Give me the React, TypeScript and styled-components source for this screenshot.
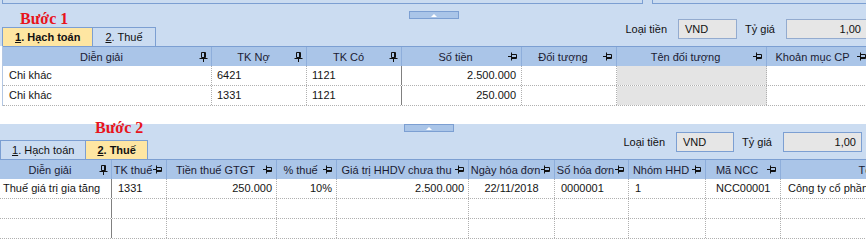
import React from 'react';
import styled, { createGlobalStyle } from 'styled-components';

const C = {
    bg: '#cbdcf1',
    head: '#aac5e8',
    line: '#7c9fd2',
    tab: '#fee6a2',
    field: '#e6e6e6',
    grey: '#e4e4e4',
    dot: '#b0b0b0',
    red: '#e8141c',
};

const GlobalStyle = createGlobalStyle`
    body {
        margin: 0;
        background: #fff;
        font-family: "Liberation Sans", Arial, sans-serif;
        font-size: 11px;
        color: #141414;
        overflow: hidden;
    }
`;

const Page = styled.div`
    width: 866px;
    height: 242px;
    overflow: hidden;
    display: flex;
    flex-direction: column;
`;

const Section = styled.div<{ $h: number }>`
    position: relative;
    height: ${p => p.$h}px;
    background: ${C.bg};
    display: flex;
    flex-direction: column;
    flex: none;
`;

const TopStrip = styled.div`
    height: 4px;
    display: flex;
    gap: 9px;
    padding-left: 2px;
`;

const StripBox = styled.div<{ $w: number }>`
    width: ${p => p.$w}px;
    flex: none;
    box-sizing: border-box;
    border: 1px solid ${C.line};
    border-top: none;
`;

// splitter grip sits over the top edge of the panel
const Grip = styled.div<{ $left: number; $top: number }>`
    position: absolute;
    left: ${p => p.$left}px;
    top: ${p => p.$top}px;
    width: 50px;
    height: 8px;
    box-sizing: border-box;
    background: ${C.head};
    border: 1px solid ${C.line};
    display: flex;
    justify-content: center;
    align-items: center;
    z-index: 2;

    &::after {
        content: '';
        border-left: 3px solid transparent;
        border-right: 3px solid transparent;
        border-bottom: 3px solid #fff;
    }
`;

const Head = styled.div<{ $pl: number; $pr: number }>`
    display: flex;
    justify-content: space-between;
    align-items: flex-end;
    padding: 0 ${p => p.$pr}px 0 ${p => p.$pl}px;
`;

const LeftCol = styled.div`
    display: flex;
    flex-direction: column;
`;

const StepLabel = styled.div<{ $ml: number; $mt: number }>`
    margin: ${p => p.$mt}px 0 0 ${p => p.$ml}px;
    height: 16px;
    line-height: 16px;
    font-family: "Liberation Serif", "Times New Roman", serif;
    font-weight: bold;
    font-size: 16px;
    color: ${C.red};
    position: relative;
    z-index: 1;
`;

const Tabs = styled.div<{ $mt: number }>`
    display: flex;
    margin-top: ${p => p.$mt}px;
`;

const Tab = styled.div<{ $active?: boolean; $px?: number }>`
    height: 19px;
    line-height: 18px;
    box-sizing: border-box;
    padding: 0 ${p => p.$px ?? 11}px;
    border: 1px solid ${C.line};
    border-bottom: none;
    background: ${p => (p.$active ? C.tab : C.bg)};
    font-weight: ${p => (p.$active ? 'bold' : 'normal')};
    color: #111;
    white-space: nowrap;

    & + & {
        margin-left: -1px;
    }

    u {
        text-decoration: underline;
    }
`;

const Fields = styled.div`
    display: flex;
    align-items: center;
    margin-bottom: 7px;
`;

const FieldLabel = styled.span`
    margin-right: 11px;
    color: #111;
`;

const FieldBox = styled.div<{ $w: number; $right?: boolean; $border: string }>`
    width: ${p => p.$w}px;
    height: 20px;
    line-height: 18px;
    box-sizing: border-box;
    flex: none;
    background: ${C.field};
    border: 1px solid ${p => p.$border};
    padding: 0 5px 0 6px;
    text-align: ${p => (p.$right ? 'right' : 'left')};
    margin-right: 8px;
    color: #111;

    &:last-child {
        margin-right: 0;
    }
`;

const GridBody = styled.div<{ $pl: number }>`
    flex: 1;
    background: #fff;
    padding-left: ${p => p.$pl}px;
    overflow: hidden;
`;

const Grid = styled.div<{ $edge?: boolean }>`
    border-left: ${p => (p.$edge ? `1px solid #b3c7e3` : 'none')};
    width: max-content;
`;

const HeaderRow = styled.div`
    display: flex;
    height: 20px;
    box-sizing: border-box;
    background: ${C.head};
    border-top: 1px solid ${C.line};
`;

const HeaderCell = styled.div<{ $w: number }>`
    width: ${p => p.$w}px;
    flex: none;
    box-sizing: border-box;
    display: flex;
    align-items: center;
    padding: 0 3px 0 1px;
    border-right: 1px solid #8eaedb;
    color: #1b1b33;
`;

const HeaderText = styled.span`
    flex: 1;
    text-align: center;
    white-space: nowrap;
`;

const Row = styled.div`
    display: flex;
    height: 20px;
    box-sizing: border-box;
    border-bottom: 1px dotted ${C.dot};
`;

const Cell = styled.div<{ $w: number; $align?: string; $pad?: number; $grey?: boolean; $solid?: boolean }>`
    width: ${p => p.$w}px;
    flex: none;
    box-sizing: border-box;
    line-height: 19px;
    padding: 0 ${p => p.$pad ?? 5}px;
    text-align: ${p => p.$align ?? 'left'};
    white-space: nowrap;
    overflow: hidden;
    background: ${p => (p.$grey ? C.grey : 'transparent')};
    border-right: 1px ${p => (p.$solid ? 'solid #808080' : `dotted ${C.dot}`)};
`;

const PinV = () => (
    <svg width="9" height="10" viewBox="0 0 9 10" style={{ flex: 'none' }}>
        <path d="M2.5 0.5h4v5h-4z M5.5 0.5v5" fill="none" stroke="#111" />
        <path d="M0.5 6.5h8 M4.5 6.5v3.5" stroke="#111" />
    </svg>
);

const PinH = () => (
    <svg width="10" height="9" viewBox="0 0 10 9" style={{ flex: 'none' }}>
        <path d="M0 4.5h3.5 M3.5 0.5v8" stroke="#111" />
        <path d="M3.5 2.5h5v4h-5z M3.5 5.5h5" fill="none" stroke="#111" />
    </svg>
);

interface Col {
    title: string;
    w: number;
    pin: 'v' | 'h';
}

interface CellData {
    text?: string;
    align?: string;
    pad?: number;
    grey?: boolean;
}

const cols1: Col[] = [
    { title: 'Diễn giải', w: 209, pin: 'v' },
    { title: 'TK Nợ', w: 95, pin: 'v' },
    { title: 'TK Có', w: 95, pin: 'v' },
    { title: 'Số tiền', w: 120, pin: 'h' },
    { title: 'Đối tượng', w: 95, pin: 'h' },
    { title: 'Tên đối tượng', w: 150, pin: 'h' },
    { title: 'Khoản mục CP', w: 104, pin: 'h' },
];

const rows1: CellData[][] = [
    [{ text: 'Chi khác', pad: 6 }, { text: '6421' }, { text: '1121' }, { text: '2.500.000', align: 'right' }, {}, { grey: true }, {}],
    [{ text: 'Chi khác', pad: 6 }, { text: '1331' }, { text: '1121' }, { text: '250.000', align: 'right' }, {}, { grey: true }, {}],
];

const cols2: Col[] = [
    { title: 'Diễn giải', w: 112, pin: 'v' },
    { title: 'TK thuế', w: 55, pin: 'h' },
    { title: 'Tiền thuế GTGT', w: 110, pin: 'h' },
    { title: '% thuế', w: 60, pin: 'h' },
    { title: 'Giá trị HHDV chưa thu', w: 132, pin: 'h' },
    { title: 'Ngày hóa đơn', w: 86, pin: 'h' },
    { title: 'Số hóa đơn', w: 74, pin: 'h' },
    { title: 'Nhóm HHD', w: 77, pin: 'h' },
    { title: 'Mã NCC', w: 75, pin: 'h' },
    { title: 'Tên nhà cung cấp', w: 256, pin: 'h' },
];

const empty2: CellData[] = cols2.map(() => ({}));

const rows2: CellData[][] = [
    [
        { text: 'Thuế giá trị gia tăng', pad: 3 },
        { text: '1331', pad: 6 },
        { text: '250.000', align: 'right', pad: 4 },
        { text: '10%', align: 'right', pad: 4 },
        { text: '2.500.000', align: 'right', pad: 4 },
        { text: '22/11/2018', align: 'center' },
        { text: '0000001', pad: 6 },
        { text: '1', pad: 6 },
        { text: 'NCC00001', pad: 10 },
        { text: 'Công ty cổ phần thương mại', pad: 7 },
    ],
    empty2,
    empty2,
];

const DataGrid = ({ cols, rows, solidAt, edge }: { cols: Col[]; rows: CellData[][]; solidAt: number; edge?: boolean }) => (
    <Grid $edge={edge}>
        <HeaderRow>
            {cols.map(c => (
                <HeaderCell key={c.title} $w={c.w}>
                    <HeaderText>{c.title}</HeaderText>
                    {c.pin === 'v' ? <PinV /> : <PinH />}
                </HeaderCell>
            ))}
        </HeaderRow>
        {rows.map((r, i) => (
            <Row key={i}>
                {r.map((d, j) => (
                    <Cell key={j} $w={cols[j].w} $align={d.align} $pad={d.pad} $grey={d.grey} $solid={j === solidAt}>
                        {d.text}
                    </Cell>
                ))}
            </Row>
        ))}
    </Grid>
);

const App = () => {
    return (
        <>
            <GlobalStyle />
            <Page>
                <Section $h={124}>
                    <TopStrip>
                        <StripBox $w={641} />
                        <StripBox $w={216} />
                    </TopStrip>
                    <Grip $left={409} $top={11} />
                    <Head $pl={2} $pr={0}>
                        <LeftCol>
                            <StepLabel $ml={18} $mt={7}>Bước 1</StepLabel>
                            <Tabs $mt={0}>
                                <Tab $active $px={12}><u>1</u>. Hạch toán</Tab>
                                <Tab $px={12}><u>2</u>. Thuế</Tab>
                            </Tabs>
                        </LeftCol>
                        <Fields>
                            <FieldLabel>Loại tiền</FieldLabel>
                            <FieldBox $w={59} $border="#93abcf">VND</FieldBox>
                            <FieldLabel>Tỷ giá</FieldLabel>
                            <FieldBox $w={81} $right $border="#93abcf" style={{ marginRight: -1 }}>1,00</FieldBox>
                        </Fields>
                    </Head>
                    <GridBody $pl={2}>
                        <DataGrid cols={cols1} rows={rows1} solidAt={2} edge />
                    </GridBody>
                </Section>
                <Section $h={118}>
                    <Grip $left={404} $top={0} />
                    <Head $pl={0} $pr={4}>
                        <LeftCol>
                            <StepLabel $ml={95} $mt={-4}>Bước 2</StepLabel>
                            <Tabs $mt={4}>
                                <Tab><u>1</u>. Hạch toán</Tab>
                                <Tab $active><u>2</u>. Thuế</Tab>
                            </Tabs>
                        </LeftCol>
                        <Fields>
                            <FieldLabel>Loại tiền</FieldLabel>
                            <FieldBox $w={58} $border={C.line}>VND</FieldBox>
                            <FieldLabel>Tỷ giá</FieldLabel>
                            <FieldBox $w={79} $right $border={C.line}>1,00</FieldBox>
                        </Fields>
                    </Head>
                    <GridBody $pl={0}>
                        <DataGrid cols={cols2} rows={rows2} solidAt={0} />
                    </GridBody>
                </Section>
            </Page>
        </>
    );
};

export default App;
